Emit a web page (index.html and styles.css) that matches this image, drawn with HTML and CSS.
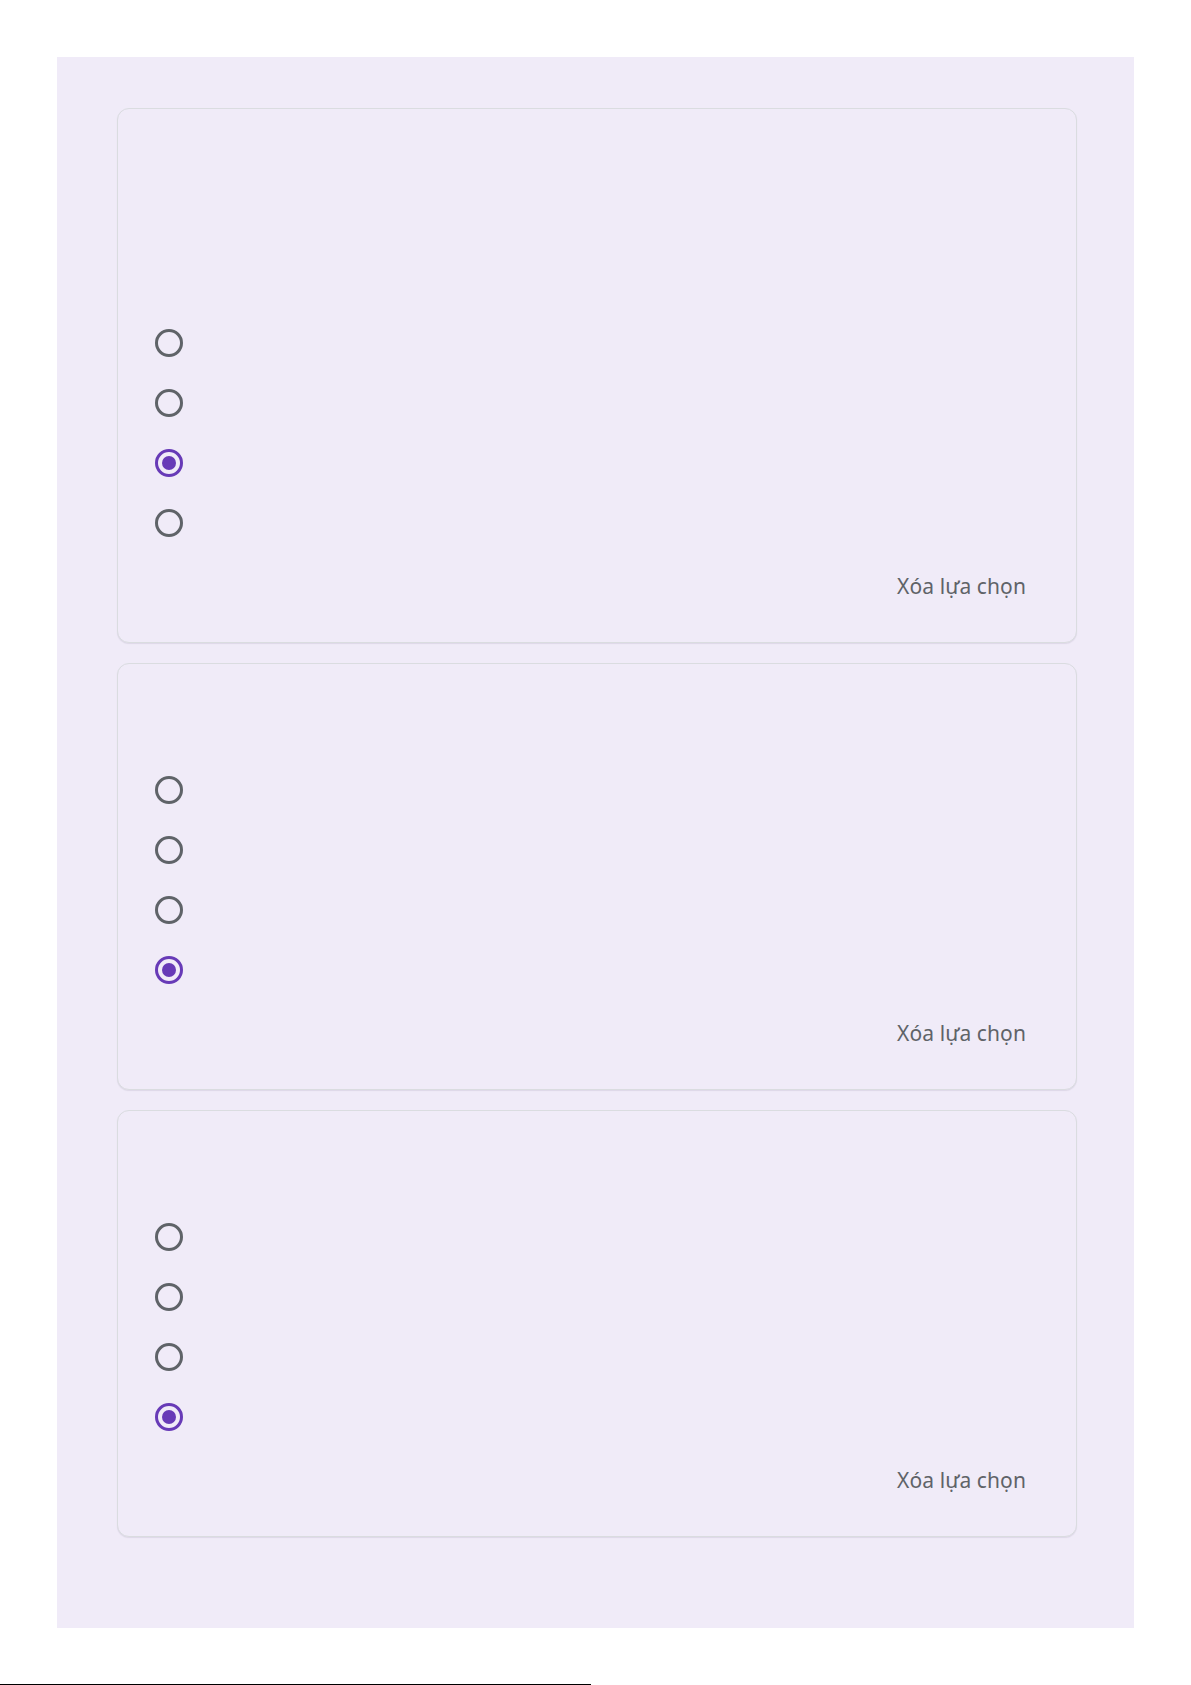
FILE: index.html
```html
<!DOCTYPE html>
<html lang="vi">
<head>
<meta charset="utf-8">
<title>Form</title>
<link rel="stylesheet" href="styles.css">
</head>
<body>
<div class="page">
  <main class="form">
    <section class="card">
      <div class="card-head card-head--tall"></div>
      <div class="options">
        <div class="option"><span class="radio"></span><span class="label"></span></div>
        <div class="option"><span class="radio"></span><span class="label"></span></div>
        <div class="option"><span class="radio radio--on"></span><span class="label"></span></div>
        <div class="option"><span class="radio"></span><span class="label"></span></div>
      </div>
      <div class="card-foot"><span class="clear">Xóa lựa chọn</span></div>
    </section>
    <section class="card">
      <div class="card-head"></div>
      <div class="options">
        <div class="option"><span class="radio"></span><span class="label"></span></div>
        <div class="option"><span class="radio"></span><span class="label"></span></div>
        <div class="option"><span class="radio"></span><span class="label"></span></div>
        <div class="option"><span class="radio radio--on"></span><span class="label"></span></div>
      </div>
      <div class="card-foot"><span class="clear">Xóa lựa chọn</span></div>
    </section>
    <section class="card">
      <div class="card-head"></div>
      <div class="options">
        <div class="option"><span class="radio"></span><span class="label"></span></div>
        <div class="option"><span class="radio"></span><span class="label"></span></div>
        <div class="option"><span class="radio"></span><span class="label"></span></div>
        <div class="option"><span class="radio radio--on"></span><span class="label"></span></div>
      </div>
      <div class="card-foot"><span class="clear">Xóa lựa chọn</span></div>
    </section>
  </main>
  <div class="bottom-space"></div>
  <div class="bottom-line"></div>
</div>
</body>
</html>
```

FILE: styles.css
```css
* { box-sizing: border-box; }
html, body { margin: 0; padding: 0; background: #ffffff; }
body { font-family: "Noto Sans", "Open Sans", sans-serif; }

.page { padding-top: 57px; }

.form {
  margin-left: 57px;
  width: 1077px;
  height: 1571px;
  background: #f0ebf8;
  padding: 51px 0 0 60px;
  display: flex;
  flex-direction: column;
  gap: 20px;
}

.card {
  width: 960px;
  border: 1px solid #dadce0;
  border-radius: 12px;
  box-shadow: 0 1px 1px rgba(60, 50, 90, 0.1);
  background: #f0ebf8;
  padding: 0 50px 0 37px;
  display: flex;
  flex-direction: column;
}

.card-head { height: 96px; }
.card-head--tall { height: 204px; }

.options { display: flex; flex-direction: column; }
.option {
  height: 60px;
  display: flex;
  align-items: center;
  gap: 16px;
}

.radio {
  width: 28px;
  height: 28px;
  border-radius: 50%;
  border: 3px solid #5f6368;
  flex: none;
  display: flex;
  align-items: center;
  justify-content: center;
}
.radio--on { border-color: #673ab7; }
.radio--on::after {
  content: "";
  width: 14px;
  height: 14px;
  border-radius: 50%;
  background: #673ab7;
}

.card-foot {
  display: flex;
  justify-content: flex-end;
  padding: 18px 0 41px;
}
.clear {
  font-size: 21px;
  line-height: 30px;
  letter-spacing: 0.1px;
  color: #5f6368;
}

.bottom-space { height: 56px; }
.bottom-line { width: 591px; height: 1px; background: #000000; }
```
